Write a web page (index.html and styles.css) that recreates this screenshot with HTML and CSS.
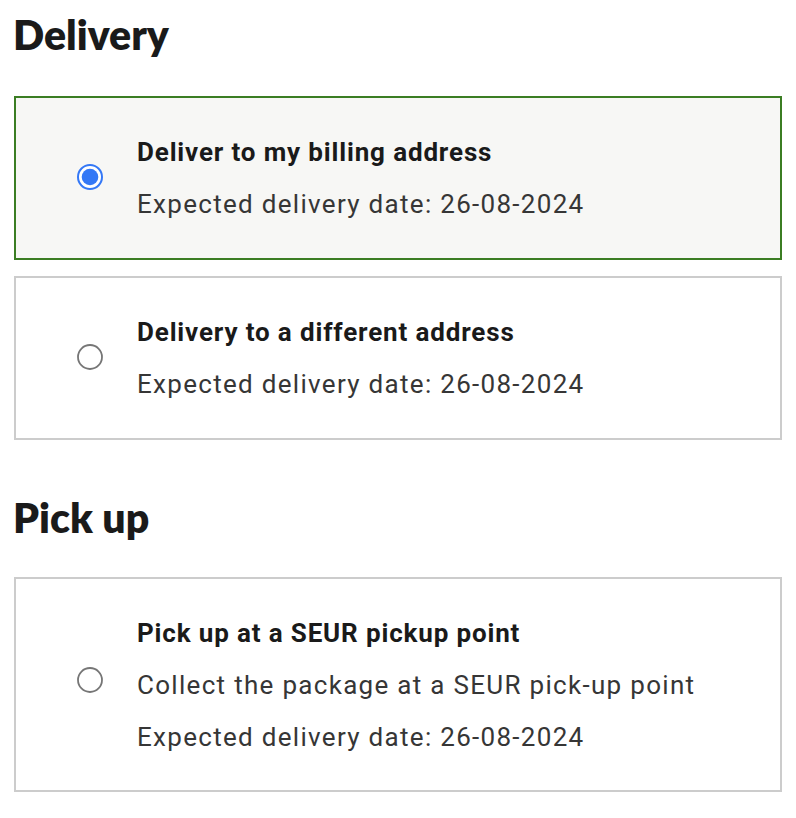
FILE: index.html
```html
<!DOCTYPE html>
<html lang="en">
<head>
<meta charset="utf-8">
<title>Delivery</title>
<link rel="stylesheet" href="styles.css">
</head>
<body>
<main class="page">
  <h2 class="section-title">Delivery</h2>
  <div class="options">
    <label class="option option--selected">
      <span class="radio">
        <svg width="26" height="26" viewBox="0 0 26 26"><circle cx="13" cy="13" r="12" fill="#fff" stroke="#3478f6" stroke-width="2"/><circle cx="13" cy="13" r="8.3" fill="#3478f6"/></svg>
      </span>
      <span class="option-text">
        <span class="option-title">Deliver to my billing address</span>
        <span class="option-line">Expected delivery date: 26-08-2024</span>
      </span>
    </label>
    <label class="option">
      <span class="radio">
        <svg width="26" height="26" viewBox="0 0 26 26"><circle cx="13" cy="13" r="12" fill="#fff" stroke="#767676" stroke-width="1.8"/></svg>
      </span>
      <span class="option-text">
        <span class="option-title">Delivery to a different address</span>
        <span class="option-line">Expected delivery date: 26-08-2024</span>
      </span>
    </label>
  </div>
  <h2 class="section-title section-title--second">Pick up</h2>
  <div class="options">
    <label class="option option--tall">
      <span class="radio">
        <svg width="26" height="26" viewBox="0 0 26 26"><circle cx="13" cy="13" r="12" fill="#fff" stroke="#767676" stroke-width="1.8"/></svg>
      </span>
      <span class="option-text">
        <span class="option-title">Pick up at a SEUR pickup point</span>
        <span class="option-line">Collect the package at a SEUR pick-up point</span>
        <span class="option-line">Expected delivery date: 26-08-2024</span>
      </span>
    </label>
  </div>
</main>
</body>
</html>
```
FILE: styles.css
```css
html, body {
  margin: 0;
  padding: 0;
  background: #ffffff;
}

.page {
  padding: 11px 14px 0 14px;
  font-family: Roboto, "Liberation Sans", Arial, sans-serif;
  color: #1a1a1a;
}

.section-title {
  margin: 0 0 37px -1px;
  font-family: Lato, "Liberation Sans", sans-serif;
  font-weight: 800;
  font-size: 41px;
  line-height: 48px;
  color: #1a1a1a;
}

.section-title--second {
  margin-top: 54px;
  margin-bottom: 35px;
}

.options {
  display: flex;
  flex-direction: column;
  gap: 16px;
}

.option {
  display: flex;
  align-items: center;
  border: 2px solid #cccccc;
  background: #ffffff;
  padding: 36px 20px 36px 61px;
}

.option--selected {
  border-color: #3b7d23;
  background: #f7f7f5;
}

.option--tall {
  padding-top: 35.5px;
  padding-bottom: 35.5px;
}

.radio {
  display: flex;
  width: 26px;
  height: 26px;
  flex: 0 0 26px;
  margin-right: 34px;
  margin-bottom: 3px;
}

.option--tall .radio {
  margin-bottom: 10px;
}

.option-text {
  display: flex;
  flex-direction: column;
  gap: 16px;
}

.option-title {
  font-size: 26px;
  line-height: 36px;
  font-weight: 700;
  letter-spacing: 0.85px;
  color: #1a1a1a;
}

.option-line {
  font-size: 26px;
  line-height: 36px;
  font-weight: 400;
  letter-spacing: 1.3px;
  color: #363636;
}
```
